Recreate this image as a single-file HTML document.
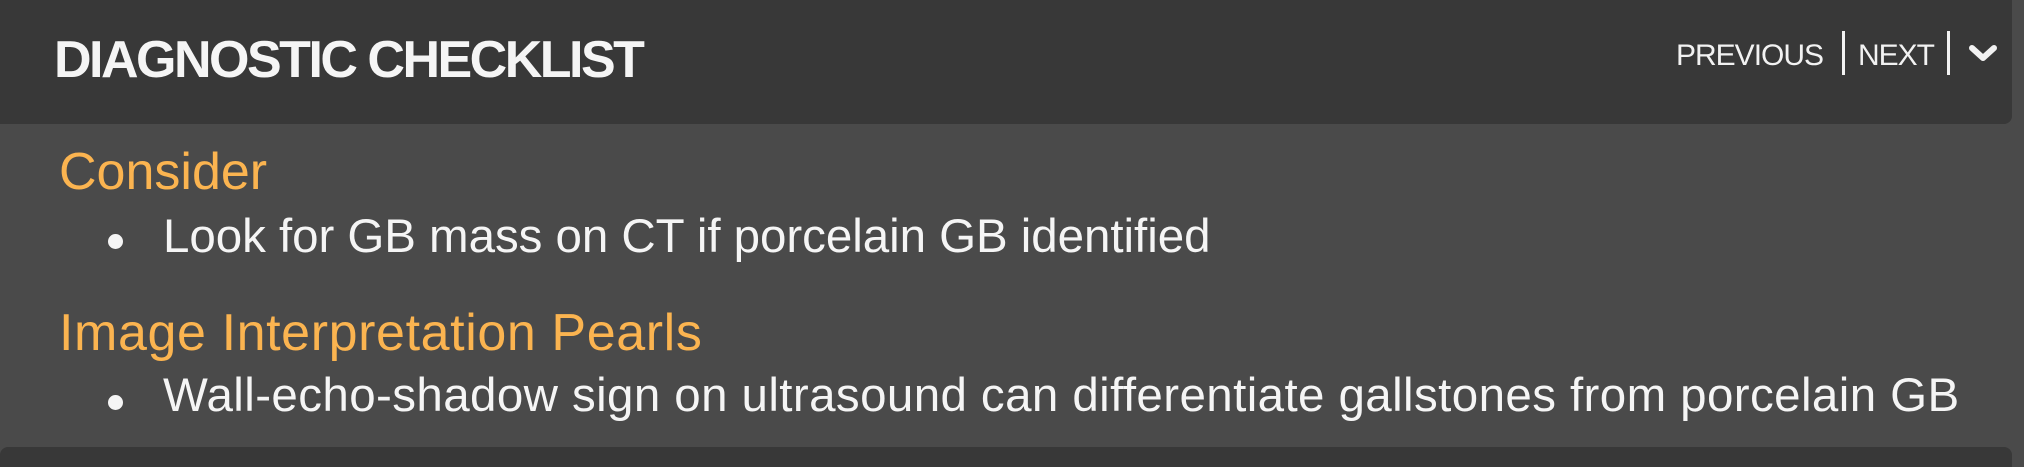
<!DOCTYPE html>
<html><head><style>
body{margin:0;width:2024px;height:462px;background:#4a4a4a;position:relative;overflow:hidden;font-family:"Liberation Sans",sans-serif;}
.hdr{position:absolute;left:0;top:0;width:2012px;height:124px;background:#383838;border-radius:0 0 8px 0;}
.title{position:absolute;left:54px;top:30px;font-size:52px;font-weight:bold;color:#f5f5f5;letter-spacing:-2.5px;line-height:60px;}
.nav{position:absolute;top:38px;font-size:30px;color:#f2f2f2;line-height:36px;}
.sep{position:absolute;top:31px;width:3px;height:44px;background:#f2f2f2;}
.h{position:absolute;left:59px;font-size:52px;color:#fbb450;line-height:60px;}
.li{position:absolute;left:163px;font-size:47.5px;color:#f5f5f5;line-height:52px;white-space:nowrap;}
.dot{position:absolute;left:108px;width:15px;height:15px;border-radius:50%;background:#f5f5f5;}
.bot{position:absolute;left:0;top:447px;width:2012px;height:20px;background:#383838;border-radius:8px 8px 0 0;}
</style></head><body>
<div class="hdr"></div>
<div class="title">DIAGNOSTIC CHECKLIST</div>
<div class="nav" style="left:1676px;letter-spacing:-1px">PREVIOUS</div>
<div class="sep" style="left:1842px"></div>
<div class="nav" style="left:1858px;letter-spacing:-1px">NEXT</div>
<div class="sep" style="left:1947px"></div>
<svg style="position:absolute;left:1968px;top:44px" width="30" height="18" viewBox="0 0 30 18"><path d="M4 4 L15 14 L26 4" stroke="#f2f2f2" stroke-width="6" fill="none" stroke-linecap="round" stroke-linejoin="round"/></svg>
<div class="h" style="top:142px">Consider</div>
<div class="dot" style="top:234px"></div>
<div class="li" style="top:211px;letter-spacing:-0.05px">Look for GB mass on CT if porcelain GB identified</div>
<div class="h" style="top:303px;letter-spacing:0.6px">Image Interpretation Pearls</div>
<div class="dot" style="top:395px"></div>
<div class="li" style="top:370px;letter-spacing:0.4px">Wall-echo-shadow sign on ultrasound can differentiate gallstones from porcelain GB</div>
<div class="bot"></div>
</body></html>
